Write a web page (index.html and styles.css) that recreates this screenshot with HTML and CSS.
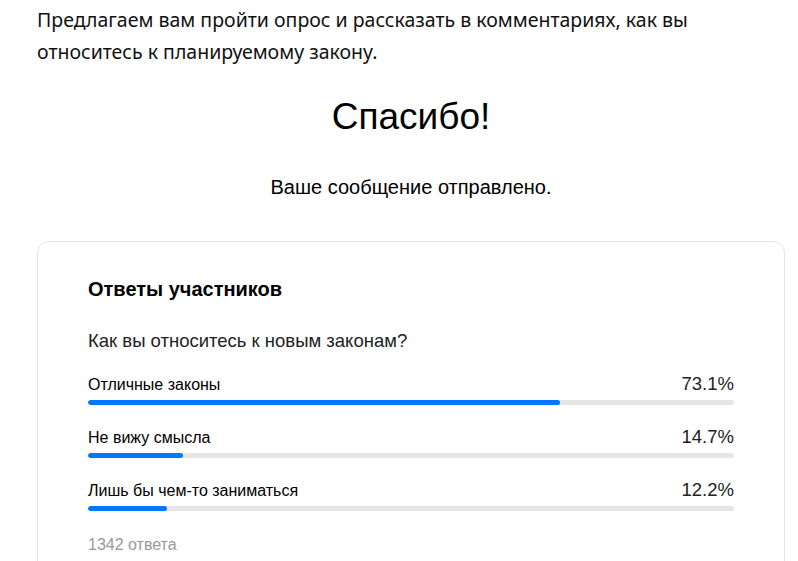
FILE: index.html
```html
<!DOCTYPE html>
<html lang="ru">

<head>
    <meta charset="UTF-8">
    <meta name="viewport" content="width=device-width, initial-scale=1.0">
    <title>Опрос</title>
    <link rel="stylesheet" href="styles.css">
</head>

<body>
    <div class="page">
        <p class="intro">Предлагаем вам пройти опрос и рассказать в комментариях, как вы относитесь к планируемому закону.</p>
        <h1 class="thanks">Спасибо!</h1>
        <p class="sent">Ваше сообщение отправлено.</p>
        <div class="card">
            <h2>Ответы участников</h2>
            <p class="question">Как вы относитесь к новым законам?</p>
            <div class="option">
                <div class="row"><span class="label">Отличные законы</span><span class="pct">73.1%</span></div>
                <div class="bar"><div class="fill" style="width: 73.1%"></div></div>
            </div>
            <div class="option">
                <div class="row"><span class="label">Не вижу смысла</span><span class="pct">14.7%</span></div>
                <div class="bar"><div class="fill" style="width: 14.7%"></div></div>
            </div>
            <div class="option">
                <div class="row"><span class="label">Лишь бы чем-то заниматься</span><span class="pct">12.2%</span></div>
                <div class="bar"><div class="fill" style="width: 12.2%"></div></div>
            </div>
            <p class="count">1342 ответа</p>
        </div>
    </div>
</body>

</html>
```

FILE: styles.css
```css
body {
    margin: 0;
    background: #fff;
    color: #000;
    font-family: "Liberation Sans", Arial, sans-serif;
}

.page {
    padding: 0 13px 0 37px;
}

.intro {
    margin: 4px 0 0;
    font-family: "Noto Sans", "Open Sans", sans-serif;
    font-size: 19.5px;
    line-height: 32px;
    color: #111;
}

.thanks {
    margin: 27px 0 0;
    text-align: center;
    font-weight: normal;
    font-size: 37px;
    line-height: 44px;
}

.sent {
    margin: 36px 0 0;
    text-align: center;
    font-size: 20px;
    line-height: 24px;
}

.card {
    margin-top: 42px;
    border: 1px solid #e6e6e6;
    border-radius: 12px;
    padding: 35px 50px 40px;
}

.card h2 {
    margin: 0;
    font-size: 20px;
    line-height: 24px;
}

.question {
    margin: 28px 0 0;
    font-size: 18.5px;
    line-height: 24px;
    color: #222;
}

.option {
    margin-top: 20px;
}

.option + .option {
    margin-top: 21px;
}

.row {
    display: flex;
    justify-content: space-between;
    align-items: baseline;
}

.label {
    font-size: 16px;
    line-height: 22px;
}

.pct {
    font-size: 18.5px;
    line-height: 22px;
    color: #222;
}

.bar {
    margin-top: 4px;
    height: 5px;
    border-radius: 3px;
    background: #e6e6e6;
    overflow: hidden;
}

.fill {
    height: 100%;
    background: #0077ff;
    border-radius: 3px;
}

.count {
    margin: 24px 0 0;
    font-size: 16px;
    line-height: 20px;
    color: #999;
}
```
